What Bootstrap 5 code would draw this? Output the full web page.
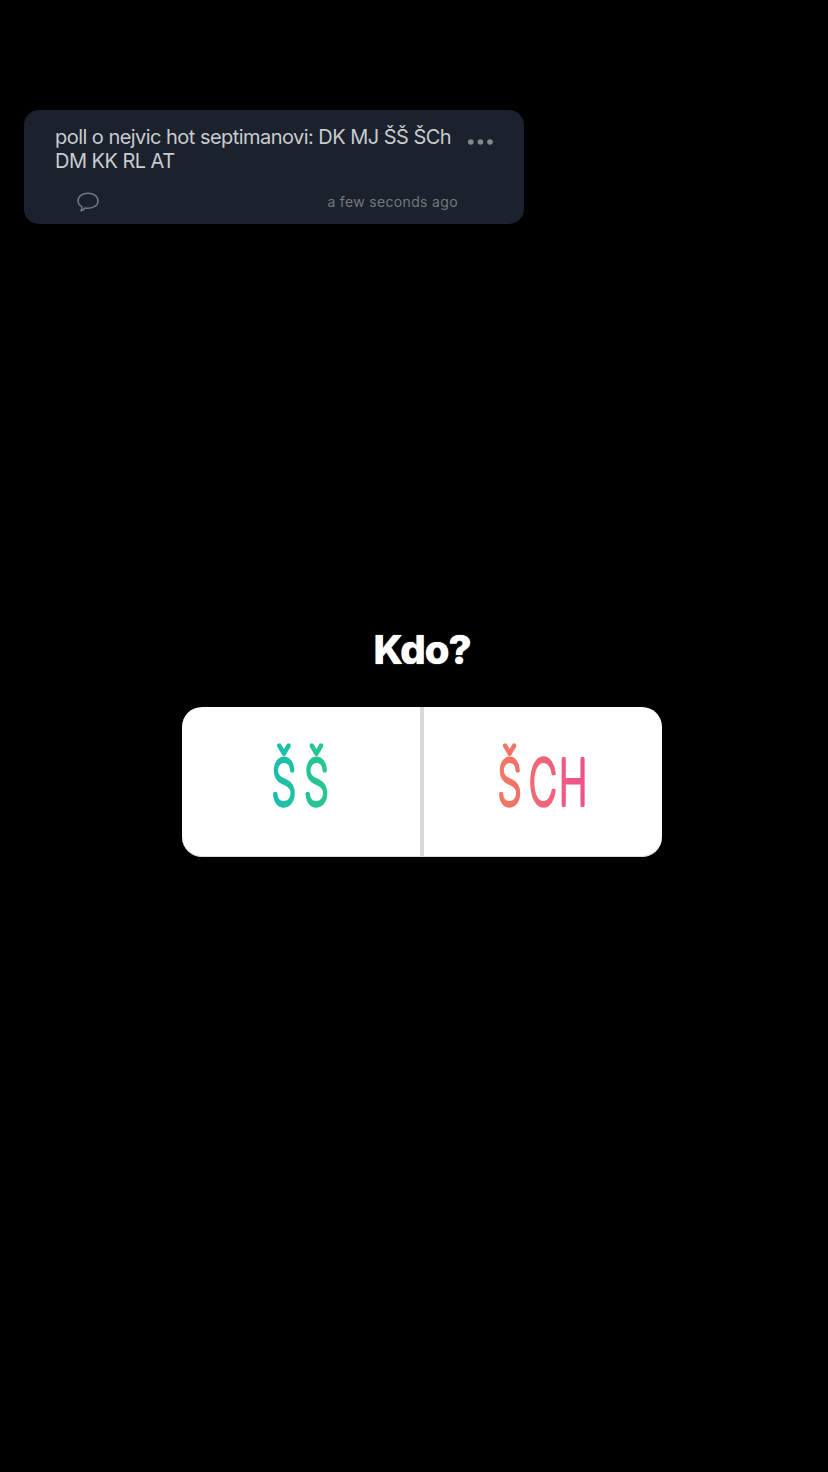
<!DOCTYPE html>
<html lang="cs">
<head>
<meta charset="utf-8">
<meta name="viewport" content="width=device-width, initial-scale=1">
<title>Kdo?</title>
<link href="https://cdn.jsdelivr.net/npm/bootstrap@5.3.0/dist/css/bootstrap.min.css" rel="stylesheet">
<style>
body{background:#000;font-family:Inter,"Liberation Sans",sans-serif}
.story{height:1472px;padding:110px 0 0 24px}
.post{width:500px;height:114px;border-radius:15px;background:#1b222d;padding:15px 30px 0 31px}
.post-text{color:#c9cbcf;font-size:20px;line-height:24px;letter-spacing:-.54px}
.dots{margin:14px 1px 0 0}
.bubble{margin:0 0 0 22px}
.ago{color:#74787e;font-size:14px;line-height:20px;letter-spacing:.34px;margin:0 36px 0 0}
.post-foot{margin-top:19px}
.poll{width:480px;margin:401px 0 0 158px}
.question{color:#fff;font-size:40px;line-height:50px;font-weight:800;letter-spacing:-1.1px;text-shadow:0 0 1px #fff}
.choices{height:150px;border-radius:20px;background:#fff;margin-top:32px;border-bottom:1px solid #ddd}
.choice{background:transparent;border:0;padding:0}
.choice + .choice{border-left:4px solid #d9d9d9}
.choice text{font-family:Inter,sans-serif;font-weight:200;font-size:63px;stroke-width:3.8px;stroke-linejoin:round;stroke-linecap:round}
</style>
</head>
<body>
<main class="story overflow-hidden">
  <article class="post d-flex flex-column">
    <div class="d-flex justify-content-between align-items-start">
      <p class="post-text text-nowrap mb-0">poll o nejvic hot septimanovi: DK MJ ŠŠ ŠCh<br>DM KK RL AT</p>
      <svg class="dots" width="25" height="6" fill="#85888d"><circle cx="2.8" cy="3" r="2.8"/><circle cx="12.4" cy="3" r="2.8"/><circle cx="22" cy="3" r="2.8"/></svg>
    </div>
    <div class="post-foot d-flex justify-content-between align-items-center">
      <svg class="bubble" width="22" height="20" fill="none" stroke="#74787e" stroke-width="1.5" stroke-linejoin="round"><path d="M4.8 14.6C2.3 13 1 11 1 8.900C1 4.500 5.300 1.200 11 1.200S21 4.500 21 8.900S16.700 16.200 11 16.200C10 16.200 9 16.100 8.100 16C7 17.500 5.800 18.300 4 18.800C4.900 17.500 5.200 16.200 4.800 14.600Z"/></svg>
      <span class="ago">a few seconds ago</span>
    </div>
  </article>
  <section class="poll">
    <h1 class="question text-center mb-0">Kdo?</h1>
    <div class="choices d-flex overflow-hidden">
      <button class="choice" style="width:238px" type="button">
        <svg class="d-block" width="238" height="149" viewBox="0 0 238 149">
          <defs><linearGradient id="teal" gradientUnits="userSpaceOnUse" x1="141" x2="236"><stop stop-color="#1bbcb4"/><stop offset="1" stop-color="#2ac886"/></linearGradient></defs>
          <text transform="scale(.635 1)" x="141 192" y="98" fill="url(#teal)" stroke="url(#teal)">ŠŠ</text>
        </svg>
      </button>
      <button class="choice" style="width:242px" type="button">
        <svg class="d-block" width="238" height="149" viewBox="0 0 238 149">
          <defs><linearGradient id="coral" gradientUnits="userSpaceOnUse" x1="118" x2="262"><stop stop-color="#f27a60"/><stop offset="1" stop-color="#ef5090"/></linearGradient></defs>
          <text transform="scale(.62 1)" x="118.500 169 217.500" y="98" fill="url(#coral)" stroke="url(#coral)">ŠCH</text>
        </svg>
      </button>
    </div>
  </section>
</main>
<script src="https://cdn.jsdelivr.net/npm/bootstrap@5.3.0/dist/js/bootstrap.bundle.min.js"></script>
</body>
</html>
